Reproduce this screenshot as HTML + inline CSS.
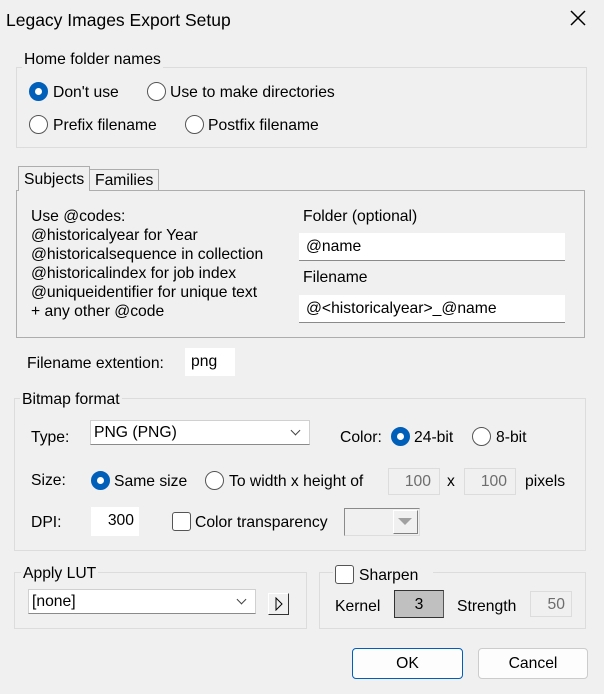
<!DOCTYPE html>
<html><head><meta charset="utf-8"><style>
*{box-sizing:border-box;margin:0;padding:0}
body{width:604px;height:694px;background:#f0f0f0;font-family:"Liberation Sans",sans-serif;font-size:15.7px;color:#000;position:relative;overflow:hidden}
.a{position:absolute;white-space:nowrap;line-height:21px}
.g{position:absolute;border:1px solid #dcdcdc}
.lbl{position:absolute;background:#f0f0f0;padding:0 2px;line-height:21px}
.r{position:absolute;width:19px;height:19px;border-radius:50%;border:1px solid #555;background:#fff}
.r.on{background:#005fb8;border-color:#005fb8}
.r.on::after{content:"";position:absolute;left:5px;top:5px;width:7px;height:7px;border-radius:50%;background:#fff}
.in{position:absolute;background:#fff;border-bottom:1px solid #8a8a8a;line-height:28px}
.dis{position:absolute;border:1px solid #dcdcdc;background:#f0f0f0;color:#6d6d6d;text-align:right;padding-right:8px}
.cb{position:absolute;width:19px;height:19px;border:1px solid #555;border-radius:3px;background:#fff}
.chev{position:absolute;width:7px;height:7px;border-right:1px solid #444;border-bottom:1px solid #444;transform:rotate(45deg)}
.btn{position:absolute;border:1px solid #ccc;border-radius:4px;background:#fdfdfd;text-align:center;line-height:30px}
</style></head><body>
<div class="a" style="left:6px;top:9px;font-size:17.5px;line-height:22px">Legacy Images Export Setup</div>
<svg class="a" style="left:569px;top:9px" width="18" height="18"><path d="M2 2L16 16M16 2L2 16" stroke="#000" stroke-width="1.5"/></svg>

<div class="g" style="left:16px;top:67px;width:571px;height:81px"></div>
<div class="lbl" style="left:22px;top:49px">Home folder names</div>
<div class="r on" style="left:29px;top:82px"></div><div class="a" style="left:53px;top:82px">Don't use</div>
<div class="r" style="left:147px;top:82px"></div><div class="a" style="left:170px;top:82px">Use to make directories</div>
<div class="r" style="left:29px;top:115px"></div><div class="a" style="left:53px;top:115px">Prefix filename</div>
<div class="r" style="left:185px;top:115px"></div><div class="a" style="left:208px;top:115px">Postfix filename</div>

<div class="g" style="left:16px;top:190px;width:569px;height:148px;border-color:#adadad"></div>
<div class="a" style="left:18px;top:166px;width:72px;height:25px;border:1px solid #adadad;border-bottom:none;background:#f0f0f0;padding-left:5px;line-height:26px">Subjects</div>
<div class="a" style="left:89px;top:169px;width:70px;height:21px;border:1px solid #adadad;border-bottom:none;padding-left:5px;line-height:21px">Families</div>
<div class="a" style="left:31px;top:206px;line-height:19px;padding-top:1px">Use @codes:<br>@historicalyear for Year<br>@historicalsequence in collection<br>@historicalindex for job index<br>@uniqueidentifier for unique text<br>+ any other @code</div>
<div class="a" style="left:303px;top:206px">Folder (optional)</div>
<div class="in" style="left:299px;top:233px;width:266px;height:28px;padding-left:7px">@name</div>
<div class="a" style="left:303px;top:267px">Filename</div>
<div class="in" style="left:299px;top:295px;width:266px;height:28px;padding-left:7px">@&lt;historicalyear&gt;_@name</div>

<div class="a" style="left:27px;top:353px">Filename extention:</div>
<div class="in" style="left:185px;top:348px;width:50px;height:28px;padding-left:6px;border-bottom:none">png</div>

<div class="g" style="left:14px;top:398px;width:572px;height:153px"></div>
<div class="lbl" style="left:20px;top:389px">Bitmap format</div>
<div class="a" style="left:31px;top:427px">Type:</div>
<div class="in" style="left:90px;top:420px;width:220px;height:25px;border:1px solid #d0d0d0;border-bottom-color:#8a8a8a;padding-left:3px;line-height:24px">PNG (PNG)</div>
<div class="chev" style="left:292px;top:427px"></div>
<div class="a" style="left:340px;top:427px">Color:</div>
<div class="r on" style="left:391px;top:427px"></div><div class="a" style="left:414px;top:427px">24-bit</div>
<div class="r" style="left:472px;top:427px"></div><div class="a" style="left:496px;top:427px">8-bit</div>
<div class="a" style="left:31px;top:470px">Size:</div>
<div class="r on" style="left:91px;top:471px"></div><div class="a" style="left:114px;top:471px">Same size</div>
<div class="r" style="left:205px;top:471px"></div><div class="a" style="left:229px;top:471px">To width x height of</div>
<div class="dis" style="left:388px;top:468px;width:52px;height:27px;line-height:25px">100</div>
<div class="a" style="left:447px;top:471px">x</div>
<div class="dis" style="left:464px;top:468px;width:52px;height:27px;line-height:25px">100</div>
<div class="a" style="left:525px;top:471px">pixels</div>
<div class="a" style="left:31px;top:512px">DPI:</div>
<div class="in" style="left:91px;top:507px;width:48px;height:29px;text-align:right;padding-right:5px;border-bottom:none">300</div>
<div class="cb" style="left:172px;top:512px"></div><div class="a" style="left:195px;top:512px">Color transparency</div>
<div class="a" style="left:344px;top:508px;width:76px;height:28px;border:1px solid #8a8a8a;border-right-color:#ddd;border-bottom-color:#ddd"></div>
<div class="a" style="left:393px;top:510px;width:25px;height:24px;border:1px solid #fff;border-right-color:#808080;border-bottom-color:#808080"></div>
<svg class="a" style="left:398px;top:518px" width="14" height="8"><path d="M0 0H14L7 7Z" fill="#a0a0a0"/></svg>

<div class="g" style="left:14px;top:572px;width:293px;height:57px"></div>
<div class="lbl" style="left:21px;top:563px">Apply LUT</div>
<div class="in" style="left:28px;top:589px;width:228px;height:25px;border:1px solid #d0d0d0;border-bottom-color:#8a8a8a;padding-left:3px;line-height:24px">[none]</div>
<div class="chev" style="left:238px;top:596px"></div>
<div class="a" style="left:268px;top:593px;width:21px;height:22px;border:1px solid #fff;border-right:1px solid #333;border-bottom:1px solid #333;background:#f0f0f0"></div>
<svg class="a" style="left:275px;top:597px" width="8" height="14"><path d="M1 1L7 7L1 13Z" fill="none" stroke="#000"/></svg>

<div class="g" style="left:319px;top:572px;width:267px;height:57px"></div>
<div class="a" style="left:333px;top:563px;width:100px;height:20px;background:#f0f0f0"></div>
<div class="cb" style="left:335px;top:565px"></div><div class="a" style="left:359px;top:565px">Sharpen</div>
<div class="a" style="left:335px;top:596px">Kernel</div>
<div class="a" style="left:394px;top:590px;width:50px;height:28px;background:#c0c0c0;border:1px solid #333;border-right-color:#555;text-align:center;line-height:27px">3</div>
<div class="a" style="left:457px;top:596px">Strength</div>
<div class="dis" style="left:530px;top:591px;width:42px;height:26px;line-height:25px;padding-right:6px">50</div>

<div class="btn" style="left:352px;top:648px;width:111px;height:31px;border-color:#005fb8">OK</div>
<div class="btn" style="left:478px;top:648px;width:110px;height:31px">Cancel</div>
</body></html>
